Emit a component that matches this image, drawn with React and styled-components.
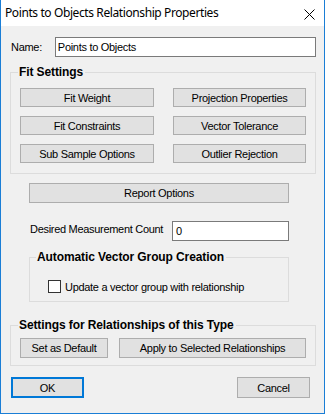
import React from "react";
import styled, { createGlobalStyle } from "styled-components";

const Global = createGlobalStyle`
  html, body { margin: 0; padding: 0; background: #f0f0f0; }
  * { box-sizing: border-box; }
`;

const Window = styled.div`
  width: 325px;
  height: 414px;
  display: flex;
  flex-direction: column;
  border: 1px solid #1a7ed6;
  border-top: none;
  background: #f0f0f0;
  font-family: "Liberation Sans", Arial, sans-serif;
  font-size: 11px;
  letter-spacing: -0.3px;
  color: #000;
`;

const TitleBar = styled.div`
  height: 26px;
  flex: none;
  background: #fff;
  display: flex;
  align-items: center;
  justify-content: space-between;
  padding: 0 9px 0 4px;
  font-family: "Noto Sans", "Liberation Sans", sans-serif;
  font-size: 12px;
  letter-spacing: -0.4px;
`;

const Title = styled.span`
  line-height: 16px;
  padding-bottom: 1px;
`;

const Close = styled.svg`
  width: 11px;
  height: 11px;
  margin-top: 3px;
`;

const Body = styled.div`
  flex: 1;
  display: flex;
  flex-direction: column;
  padding: 11px 8px 0 9px;
`;

const Row = styled.div`
  display: flex;
  align-items: center;
  margin-top: ${(p) => p.$mt || 0}px;
  margin-left: ${(p) => p.$ml || 0}px;
  gap: ${(p) => p.$gap || 0}px;
`;

const Label = styled.label`
  width: ${(p) => p.$w}px;
  line-height: 13px;
  margin-top: ${(p) => p.$dy || 0}px;
  padding-left: 1px;
`;

const TextInput = styled.div`
  width: ${(p) => p.$w}px;
  height: 20px;
  border: 1px solid #7a7a7a;
  background: #fff;
  padding-left: ${(p) => p.$pl || 2}px;
  line-height: 18px;
`;

const Group = styled.fieldset`
  margin: ${(p) => p.$mt || 0}px 0 0 ${(p) => p.$ml || 0}px;
  width: ${(p) => p.$w}px;
  border: 1px solid #dcdcdc;
  padding: ${(p) => p.$pad};
  min-width: 0;
`;

const Legend = styled.legend`
  font-weight: bold;
  font-size: 12px;
  letter-spacing: -0.1px;
  line-height: 14px;
  padding: 0 2px 0 1px;
  margin-left: ${(p) => p.$ml}px;
`;

const ButtonGrid = styled.div`
  display: grid;
  grid-template-columns: 134px 133px;
  column-gap: 19px;
  row-gap: 9px;
`;

const Button = styled.div`
  width: ${(p) => (p.$w ? p.$w + "px" : "auto")};
  height: ${(p) => p.$h || 19}px;
  background: #e1e1e1;
  border: ${(p) => (p.$primary ? "2px solid #0078d7" : "1px solid #adadad")};
  display: flex;
  align-items: center;
  justify-content: center;
  white-space: nowrap;
`;

const CheckRow = styled.label`
  display: flex;
  align-items: center;
  gap: 4px;
  height: 15px;
`;

const Box = styled.span`
  width: 13px;
  height: 13px;
  border: 1px solid #333;
  background: #fff;
`;

const Footer = styled.div`
  display: flex;
  justify-content: space-between;
  margin: 11px 6px 0 1px;
`;

export default function App() {
  return (
    <>
      <Global />
      <Window>
        <TitleBar>
          <Title>Points to Objects Relationship Properties</Title>
          <Close viewBox="0 0 11 11">
            <path d="M0.5 0.5 L10.5 10.5 M10.5 0.5 L0.5 10.5" stroke="#000" strokeWidth="1" fill="none" />
          </Close>
        </TitleBar>
        <Body>
          <Row>
            <Label $w={45}>Name:</Label>
            <TextInput $w={262}>Points to Objects</TextInput>
          </Row>

          <Group $mt={8} $w={306} $pad="9px 9px 10px 9px">
            <Legend $ml={-2}>Fit Settings</Legend>
            <ButtonGrid>
              <Button>Fit Weight</Button>
              <Button>Projection Properties</Button>
              <Button>Fit Constraints</Button>
              <Button>Vector Tolerance</Button>
              <Button>Sub Sample Options</Button>
              <Button>Outlier Rejection</Button>
            </ButtonGrid>
          </Group>

          <Row $mt={9} $ml={19}>
            <Button $w={260} $h={20}>Report Options</Button>
          </Row>

          <Row $mt={18} $ml={19}>
            <Label $w={143} $dy={-3}>Desired Measurement Count</Label>
            <TextInput $w={117} $pl={3}>0</TextInput>
          </Row>

          <Group $mt={9} $ml={19} $w={260} $pad="15px 9px 7px 18px">
            <Legend $ml={-12}>Automatic Vector Group Creation</Legend>
            <CheckRow>
              <Box />
              Update a vector group with relationship
            </CheckRow>
          </Group>

          <Group $mt={16} $w={306} $pad="6px 9px 7px 9px">
            <Legend $ml={-2}>Settings for Relationships of this Type</Legend>
            <Row $gap={11}>
              <Button $w={88} $h={20}>Set as Default</Button>
              <Button $w={187} $h={20}>Apply to Selected Relationships</Button>
            </Row>
          </Group>

          <Footer>
            <Button $w={73} $h={21} $primary>OK</Button>
            <Button $w={73} $h={21}>Cancel</Button>
          </Footer>
        </Body>
      </Window>
    </>
  );
}
